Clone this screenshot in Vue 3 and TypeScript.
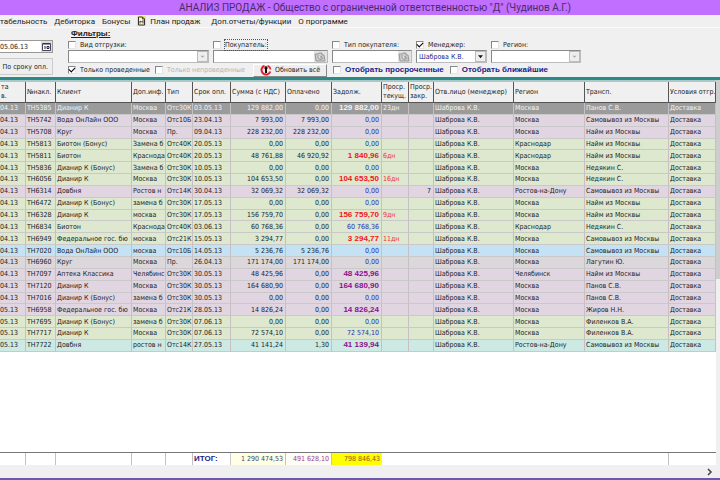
<script setup lang="ts">
import { ref } from 'vue'

interface Row {
  date: string
  doc: string
  client: string
  info: string
  type: string
  due: string
  sum: string
  paid: string
  debt: string
  tone: string
  debtTone: string
  late: string
  closed: string
  region: string
  carrier: string
}

type Raw = [string, string, string, string, string, string, string, string, string, string, string, string, string, string, string]

const raw: Raw[] = [
  ['04.13', 'ТН5385', 'Дианир К', 'Москва', 'Отс30К', '03.05.13', '129 882,00', '0,00', '129 882,00', 'selected', 'strong', '23дн', '', 'Москва', 'Панов С.В.'],
  ['04.13', 'ТН5742', 'Вода ОнЛайн ООО', 'Москва', 'Отс10Б', '23.04.13', '7 993,00', '7 993,00', '0,00', 'pink', 'zero', '', '', 'Москва', 'Самовывоз из Москвы'],
  ['04.13', 'ТН5708', 'Круг', 'Москва', 'Пр.', '09.04.13', '228 232,00', '228 232,00', '0,00', 'pink', 'zero', '', '', 'Москва', 'Найм из Москвы'],
  ['04.13', 'ТН5813', 'Биотон (Бонус)', 'Замена б', 'Отс40К', '20.05.13', '0,00', '0,00', '0,00', 'green', 'zero', '', '', 'Краснодар', 'Найм из Москвы'],
  ['04.13', 'ТН5811', 'Биотон', 'Краснода', 'Отс40К', '20.05.13', '48 761,88', '46 920,92', '1 840,96', 'green', 'red', '6дн', '', 'Краснодар', 'Найм из Москвы'],
  ['04.13', 'ТН5836', 'Дианир К (Бонус)', 'Замена б', 'Отс30К', '10.05.13', '0,00', '0,00', '0,00', 'green', 'zero', '', '', 'Москва', 'Недякин С.'],
  ['04.13', 'ТН6056', 'Дианир К', 'Москва', 'Отс30К', '10.05.13', '104 653,50', '0,00', '104 653,50', 'green', 'red', '16дн', '', 'Москва', 'Недякин С.'],
  ['04.13', 'ТН6314', 'Довбня', 'Ростов н', 'Отс14К', '30.04.13', '32 069,32', '32 069,32', '0,00', 'pink', 'zero', '', '7', 'Ростов-на-Дону', 'Самовывоз из Москвы'],
  ['04.13', 'ТН6472', 'Дианир К (Бонус)', 'замена б', 'Отс30К', '17.05.13', '0,00', '0,00', '0,00', 'green', 'zero', '', '', 'Москва', 'Найм из Москвы'],
  ['04.13', 'ТН6328', 'Дианир К', 'москва', 'Отс30К', '17.05.13', '156 759,70', '0,00', '156 759,70', 'green', 'red', '9дн', '', 'Москва', 'Найм из Москвы'],
  ['04.13', 'ТН6834', 'Биотон', 'Краснода', 'Отс40К', '03.06.13', '60 768,36', '0,00', '60 768,36', 'green', 'zero', '', '', 'Краснодар', 'Недякин С.'],
  ['04.13', 'ТН6949', 'Федеральное гос. бю', 'москва', 'Отс21К', '15.05.13', '3 294,77', '0,00', '3 294,77', 'green', 'red', '11дн', '', 'Москва', 'Самовывоз из Москвы'],
  ['04.13', 'ТН7020', 'Вода ОнЛайн ООО', 'москва', 'Отс10Б', '14.05.13', '5 236,76', '5 236,76', '0,00', 'blue', 'zero', '', '', 'Москва', 'Самовывоз из Москвы'],
  ['04.13', 'ТН6960', 'Круг', 'Москва', 'Пр.', '26.04.13', '171 174,00', '171 174,00', '0,00', 'grey', 'zero', '', '', 'Москва', 'Лагутин Ю.'],
  ['04.13', 'ТН7097', 'Аптека Классика', 'Челябинс', 'Отс30К', '30.05.13', '48 425,96', '0,00', '48 425,96', 'pink', 'violet', '', '', 'Челябинск', 'Найм из Москвы'],
  ['04.13', 'ТН7120', 'Дианир К', 'Москва', 'Отс30К', '30.05.13', '164 680,90', '0,00', '164 680,90', 'pink', 'violet', '', '', 'Москва', 'Панов С.В.'],
  ['04.13', 'ТН7016', 'Дианир К (Бонус)', 'замена б', 'Отс30К', '30.05.13', '0,00', '0,00', '0,00', 'pink', 'zero', '', '', 'Москва', 'Панов С.В.'],
  ['05.13', 'ТН6958', 'Федеральное гос. бю', 'Москва', 'Отс21К', '28.05.13', '14 826,24', '0,00', '14 826,24', 'pink', 'violet', '', '', 'Москва', 'Жиров Н.Н.'],
  ['05.13', 'ТН7695', 'Дианир К (Бонус)', 'замена б', 'Отс30К', '07.06.13', '0,00', '0,00', '0,00', 'green', 'zero', '', '', 'Москва', 'Филенков В.А.'],
  ['05.13', 'ТН7717', 'Дианир К', 'Москва', 'Отс30К', '07.06.13', '72 574,10', '0,00', '72 574,10', 'green', 'zero', '', '', 'Москва', 'Филенков В.А.'],
  ['05.13', 'ТН7722', 'Довбня', 'ростов н', 'Отс14К', '27.05.13', '41 141,24', '1,30', '41 139,94', 'cyan', 'violet', '', '', 'Ростов-на-Дону', 'Самовывоз из Москвы'],
]

const rows: Row[] = raw.map(
  ([date, doc, client, info, type, due, sum, paid, debt, tone, debtTone, late, closed, region, carrier]) => ({
    date, doc, client, info, type, due, sum, paid, debt, tone, debtTone, late, closed, region, carrier,
  }),
)

const columns: string[] = ['date', 'doc', 'client', 'info', 'type', 'due', 'sum', 'paid', 'debt', 'late', 'closed', 'manager', 'region', 'carrier', 'terms']
const headers: string[] = ['та\nв.', '№накл.', 'Клиент', 'Доп.инф.', 'Тип', 'Срок опл.', 'Сумма (с НДС)', 'Оплачено', 'Задолж.', 'Проср.\nтекущ.', 'Проср.\nзакр.', 'Отв.лицо (менеджер)', 'Регион', 'Трансп.', 'Условия отгр.']

const date = ref('05.06.13')
const byShipment = ref(false)
const byBuyer = ref(false)
const byBuyerType = ref(false)
const byManager = ref(true)
const byRegion = ref(false)
const posted = ref(true)
const overdue = ref(false)
const upcoming = ref(false)
</script>

<template>
  <div class="window">
    <header class="title">АНАЛИЗ ПРОДАЖ - Общество с ограниченной ответственностью "Д" (Чудинов А.Г.)</header>

    <nav class="menu">
      <a href="#">табельность</a>
      <a href="#">Дебиторка</a>
      <a href="#">Бонусы</a>
      <a href="#" class="plan">
        <svg width="9" height="10" viewBox="0 0 9 10" aria-hidden="true">
          <path d="M0 0h9v10H0z" fill="#f1e870" />
          <path d="M1.500 1h4l2 2v6h-6z" fill="#fff8c8" stroke="#333" />
          <path d="M5.500 1v2h2M3 7.500V5l1.500 1L6 4.500v3" fill="none" stroke="#444" />
        </svg>
        План продаж
      </a>
      <a href="#">Доп.отчеты/функции</a>
      <a href="#">О программе</a>
    </nav>

    <section class="panel">
      <div class="side">
        <div class="date">
          <input v-model="date" type="text" aria-label="Дата" />
          <button type="button" aria-label="Календарь">
            <svg width="9" height="9" viewBox="0 0 9 9" aria-hidden="true">
              <path d="M.5 1.500h8v7h-8z" fill="#fff" stroke="#445" />
              <path d="M1 2h7M3 4v3M5 4.500h2v2H5z" fill="none" stroke="#224" />
            </svg>
          </button>
        </div>
        <button type="button" class="due-button">По сроку опл.</button>
      </div>

      <div class="filters">
        <h2>Фильтры:</h2>
        <div class="fields">
          <div class="field shipment">
            <label><input v-model="byShipment" type="checkbox" />Вид отгрузки:</label>
            <div class="combo off">
              <select disabled aria-label="Вид отгрузки"><option></option></select>
              <svg class="arrow" viewBox="0 0 11 11" aria-hidden="true"><path d="M3 4.500h5L5.500 7z" /></svg>
            </div>
          </div>
          <div class="field buyer">
            <label><input v-model="byBuyer" type="checkbox" /><span class="focus">Покупатель:</span></label>
            <div class="combo">
              <input type="text" aria-label="Покупатель" />
              <button type="button" class="pick" aria-label="Выбрать покупателя">
                <svg width="12" height="10" viewBox="0 0 12 10" aria-hidden="true">
                  <path d="M1 2h3l1-1h3v2h2l1 6H2zM4 3v3l3 2V4l2 3" fill="#ccc" stroke="#999" />
                </svg>
              </button>
            </div>
          </div>
          <div class="field kind">
            <label><input v-model="byBuyerType" type="checkbox" />Тип покупателя:</label>
            <div class="combo">
              <input type="text" aria-label="Тип покупателя" />
              <button type="button" class="pick" aria-label="Выбрать тип">
                <svg width="12" height="10" viewBox="0 0 12 10" aria-hidden="true">
                  <path d="M1 2h3l1-1h3v2h2l1 6H2zM4 3v3l3 2V4l2 3" fill="#ccc" stroke="#999" />
                </svg>
              </button>
            </div>
          </div>
          <div class="field manager">
            <label><input v-model="byManager" type="checkbox" />Менеджер:</label>
            <div class="combo">
              <select aria-label="Менеджер"><option>Шаброва К.В.</option></select>
              <svg class="arrow" viewBox="0 0 11 11" aria-hidden="true"><path d="M2.500 4h6l-3 3.500z" /></svg>
            </div>
          </div>
          <div class="field region">
            <label><input v-model="byRegion" type="checkbox" />Регион:</label>
            <div class="combo off">
              <select disabled aria-label="Регион"><option></option></select>
              <svg class="arrow" viewBox="0 0 11 11" aria-hidden="true"><path d="M3 4.500h5L5.500 7z" /></svg>
            </div>
          </div>
        </div>

        <div class="options">
          <div class="posting">
            <label><input v-model="posted" type="checkbox" />Только проведенные</label>
            <label class="disabled"><input type="checkbox" disabled />Только непроведенные</label>
          </div>
          <button type="button" class="refresh">
            <svg width="12" height="12" viewBox="0 0 12 12" aria-hidden="true">
              <path d="M4.500 1.800A4.500 4.500 0 1 0 10.300 7.500" fill="none" stroke="#e3202b" stroke-width="2" />
              <path d="M7.500 1.800A4.500 4.500 0 0 1 10.500 5.500" fill="none" stroke="#e3202b" stroke-width="1.500" />
              <path d="M6 3v6" stroke="#1c0608" stroke-width="2" />
              <path d="M3.800 4.500L6 1.800l2.200 2.700z" fill="#1c0608" />
            </svg>
            Обновить всё
          </button>
          <label class="strong"><input v-model="overdue" type="checkbox" />Отобрать просроченные</label>
          <label class="strong"><input v-model="upcoming" type="checkbox" />Отобрать ближайшие</label>
        </div>
      </div>
    </section>

    <main class="grid">
      <div class="sheet">
        <table class="data">
          <colgroup><col v-for="c in columns" :key="c" :class="'c-' + c" /></colgroup>
          <thead>
            <tr><th v-for="h in headers" :key="h" scope="col">{{ h }}</th></tr>
          </thead>
          <tbody>
            <tr v-for="r in rows" :key="r.doc" :class="r.tone">
              <td class="date-cell">{{ r.date }}</td>
              <td>{{ r.doc }}</td>
              <td>{{ r.client }}</td>
              <td>{{ r.info }}</td>
              <td>{{ r.type }}</td>
              <td>{{ r.due }}</td>
              <td class="num">{{ r.sum }}</td>
              <td class="num">{{ r.paid }}</td>
              <td class="num" :class="'debt-' + r.debtTone">{{ r.debt }}</td>
              <td class="late">{{ r.late }}</td>
              <td class="num">{{ r.closed }}</td>
              <td>Шаброва К.В.</td>
              <td>{{ r.region }}</td>
              <td>{{ r.carrier }}</td>
              <td>Доставка</td>
            </tr>
          </tbody>
        </table>
        <div class="blank"></div>
        <table class="totals">
          <colgroup><col v-for="c in columns" :key="c" :class="'c-' + c" /></colgroup>
          <tbody>
            <tr>
              <td></td><td></td><td></td><td></td><td></td>
              <th scope="row">ИТОГ:</th>
              <td class="num t-sum">1 290 474,53</td>
              <td class="num t-paid">491 628,10</td>
              <td class="num t-debt">798 846,43</td>
              <td class="open"></td><td class="open"></td><td class="open"></td><td class="open"></td><td></td><td class="open"></td>
            </tr>
          </tbody>
        </table>
      </div>
      <div class="vscroll"><div class="thumb"></div></div>
    </main>

    <div class="hscroll">
      <svg width="6" height="8" viewBox="0 0 6 8" aria-hidden="true"><path d="M1 1l3 3-3 3" fill="none" stroke="#444" stroke-width="1.500" /></svg>
    </div>
    <div class="edge"></div>
  </div>
</template>

<style>
body {
  margin: 0;
}
</style>

<style scoped>
.window {
  display: flex;
  flex-direction: column;
  min-height: 100vh;
  overflow: hidden;
  background: #f0f0f0;
  color: #222;
  font-family: "DejaVu Sans Condensed", "Liberation Sans", sans-serif;
  font-size: 7px;
  line-height: 10px;
}
.window * {
  box-sizing: border-box;
}
input,
select,
button {
  margin: 0;
  font: inherit;
  color: inherit;
  border-radius: 0;
}
.title {
  height: 15px;
  background: #c06fff;
  color: #4a2a6c;
  font-family: Roboto, sans-serif;
  font-size: 10px;
  line-height: 15px;
  padding-left: 30px;
  text-align: center;
  white-space: nowrap;
}
.menu {
  display: flex;
  gap: 7px;
  height: 13px;
  border-bottom: 1px solid #fafafa;
  font-family: Roboto, sans-serif;
  font-size: 8px;
  line-height: 13px;
  white-space: nowrap;
}
.menu a {
  color: #222;
  text-decoration: none;
}
.plan {
  display: flex;
  align-items: center;
  gap: 4px;
  margin-right: 4px;
}
.panel {
  display: flex;
  gap: 15px;
  height: 49px;
}
.side {
  display: flex;
  flex-direction: column;
  gap: 5px;
  width: 53px;
  padding-top: 12px;
}
.date {
  display: flex;
  height: 13px;
  background: #fff;
  border: 1px solid #999;
  border-left: 0;
}
.date input {
  flex: 1;
  min-width: 0;
  padding: 0;
  border: 0;
  background: none;
}
.date button {
  display: flex;
  align-items: center;
  padding: 0 1px;
  border: 0;
  background: #ddd;
}
.due-button {
  height: 17px;
  padding: 0 4px 0 0;
  border: 1px solid #ccc;
  border-left: 0;
  background: #eee;
  text-align: right;
  white-space: nowrap;
}
.filters {
  flex: 1;
}
h2 {
  margin: 0;
  padding: 1px 0 0 3px;
  font-size: 8px;
  line-height: 10px;
  font-family: "Liberation Sans", sans-serif;
  text-decoration: underline;
}
.fields {
  display: flex;
  gap: 4px;
}
label {
  display: flex;
  align-items: center;
  gap: 4px;
  height: 11px;
  white-space: nowrap;
}
input[type="checkbox"] {
  appearance: none;
  width: 8px;
  height: 8px;
  background: #fff;
  border: 1px solid #e4e4e4;
  border-top-color: #888;
  border-left-color: #888;
}
input[type="checkbox"]:checked::after {
  content: "";
  display: block;
  width: 5px;
  height: 3px;
  border-left: 1px solid #000;
  border-bottom: 1px solid #000;
  transform: rotate(-45deg);
}
.focus {
  outline: 1px dotted #555;
}
.shipment {
  width: 141px;
}
.buyer {
  width: 115px;
}
.kind {
  width: 80px;
}
.manager {
  width: 71px;
}
.region {
  width: 90px;
}
.combo {
  display: flex;
  height: 13px;
  background: #fff;
  border: 1px solid #bbb;
  border-top-color: #888;
  border-left-color: #888;
}
.combo select,
.combo input {
  appearance: none;
  flex: 1;
  min-width: 0;
  padding: 0 2px;
  border: 0;
  background: none;
  color: #25258c;
}
.arrow {
  width: 11px;
  height: 11px;
  background: #eee;
  border: 1px solid #bbb;
  fill: #111;
}
.off .arrow {
  fill: #aaa;
}
.pick {
  display: flex;
  align-items: center;
  width: 13px;
  padding: 0;
  border: 0;
  background: #e4e4e4;
}
.options {
  display: flex;
  align-items: center;
  gap: 6px;
  height: 14px;
}
.posting {
  display: flex;
  gap: 5px;
  width: 179px;
}
.disabled {
  color: #b4b4b4;
}
.refresh {
  display: flex;
  align-items: center;
  justify-content: center;
  gap: 3px;
  width: 74px;
  height: 13px;
  padding: 0;
  border: 1px solid #fff;
  border-right-color: #888;
  border-bottom-color: #888;
  background: #eee;
  white-space: nowrap;
}
.strong {
  color: #1c1c8c;
  font-family: "Liberation Sans", sans-serif;
  font-size: 8px;
  font-weight: bold;
}
.grid {
  display: flex;
  flex: 1;
  border-top: 3px solid #2a8a88;
}
.sheet {
  display: flex;
  flex: 1;
  flex-direction: column;
  min-width: 0;
  border-top: 2px solid #a9c9c9;
  background: #fff;
}
table {
  width: 100%;
  table-layout: fixed;
  border-collapse: separate;
  border-spacing: 0;
}
.data {
  height: 270px;
}
.c-date { width: 26px; }
.c-doc { width: 30px; }
.c-client { width: 76px; }
.c-info { width: 34px; }
.c-type { width: 27px; }
.c-due { width: 38px; }
.c-sum { width: 55px; }
.c-paid { width: 46px; }
.c-debt { width: 50px; }
.c-late { width: 27px; }
.c-closed { width: 25px; }
.c-manager { width: 80px; }
.c-region { width: 71px; }
.c-terms { width: 47px; }
th,
td {
  padding: 0 1px;
  overflow: hidden;
  white-space: nowrap;
  text-align: left;
}
thead th {
  height: 21px;
  padding: 0 0 0 1px;
  border-right: 1px solid #555;
  border-bottom: 1px solid #555;
  background: #f0f0f0;
  font-weight: normal;
  line-height: 9px;
  white-space: pre;
}
tbody td {
  border-right: 1px solid #c4c0c4;
  border-bottom: 1px solid #c9c9c9;
}
.data td {
  padding-right: 0;
  line-height: 10px;
}
.data .date-cell {
  padding-left: 0;
}
.data .num,
.num {
  padding-right: 2px;
  text-align: right;
}
.pink { background: #e1d5e1; }
.green { background: #dde8cf; }
.blue { background: #c5e2f4; }
.grey { background: #dcd7da; }
.cyan { background: #cde9e3; }
.late { color: #e33; }
.debt-zero { color: #2b2bb0; }
.debt-red,
.debt-violet,
.debt-strong {
  font-family: "Liberation Sans", sans-serif;
  font-size: 8px;
  font-weight: bold;
}
.debt-red { color: #f3141e; }
.debt-violet { color: #8a108f; }
.selected,
.selected td {
  background: #9b9b9b;
  color: #f4f4f4;
}
.blank {
  flex: 1;
}
.totals {
  border-top: 1px solid #777;
}
.totals th,
.totals td {
  height: 12px;
  border-bottom: 0;
}
.totals th {
  color: #1c1c80;
  font-family: "Liberation Sans", sans-serif;
  font-size: 8px;
  border-right: 1px solid #ccc;
}
.totals .open {
  border-right: 0;
}
.t-sum { background: #ffffe6; color: #444466; }
.t-paid { background: #fffdf5; color: #a0408c; }
.totals .t-debt { background: #ff0; color: #8a5a10; border-right: 0; }
.vscroll {
  width: 4px;
  background: #f0f0f0;
}
.thumb {
  height: 199px;
  background: #cdcdcd;
}
.hscroll {
  display: flex;
  align-items: center;
  justify-content: flex-end;
  height: 13px;
  padding-right: 7px;
}
.edge {
  height: 2px;
  background: #6c58ac;
}
</style>
